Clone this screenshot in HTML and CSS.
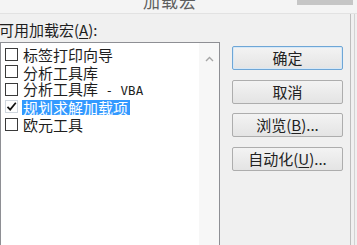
FILE: index.html
```html
<!DOCTYPE html>
<html lang="zh-CN">
<head>
  <meta charset="UTF-8">
  <title>加载宏</title>
  <link rel="stylesheet" href="styles.css">
</head>
<body>
  <div class="window">
    <div class="titlebar">
      <span class="title">加载宏</span>
      <span class="close"></span>
    </div>
    <div class="client">
      <div class="left">
        <div class="label">可用加载宏(<u>A</u>):</div>
        <div class="listbox">
          <ul class="items">
            <li><span class="check"></span><span class="name">标签打印向导</span></li>
            <li><span class="check"></span><span class="name">分析工具库</span></li>
            <li><span class="check"></span><span class="name">分析工具库<span class="latin"> - VBA</span></span></li>
            <li class="selected"><span class="check checked"><svg viewBox="0 0 13 13" width="13" height="13"><path d="M2.5 6.8 L5.2 9.6 L10.8 2.8" fill="none" stroke="#111" stroke-width="1.7"/></svg></span><span class="name">规划求解加载项</span></li>
            <li><span class="check"></span><span class="name">欧元工具</span></li>
          </ul>
          <div class="scrollbar">
            <svg class="arrow" viewBox="0 0 9 6" width="9" height="6"><path d="M1 5 L4.5 1.5 L8 5" fill="none" stroke="#a6a6a6" stroke-width="1.4"/></svg>
          </div>
        </div>
      </div>
      <div class="buttons">
        <button class="btn default">确定</button>
        <button class="btn">取消</button>
        <button class="btn">浏览(<u>B</u>)...</button>
        <button class="btn">自动化(<u>U</u>)...</button>
      </div>
    </div>
  </div>
</body>
</html>
```

FILE: styles.css
```css
* { box-sizing: border-box; }
html, body {
  margin: 0; padding: 0;
  width: 357px; height: 245px;
  overflow: hidden;
  background: #f0f0f0;
}
body {
  font-family: "Noto Sans CJK SC", "Liberation Sans", sans-serif;
  font-size: 15px;
  color: #1e1e1e;
}
.titlebar {
  height: 14px;
  display: flex;
  align-items: flex-start;
  background: #f4f4f4;
  border-bottom: 1px solid #e2e2e2;
  overflow: hidden;
}
.title {
  margin: -8px 0 0 143px;
  font-size: 17px; line-height: 17px;
  color: #5e5e5e;
  letter-spacing: 1px;
}
.close {
  margin-left: auto; margin-right: 4px;
  width: 56px; height: 5px;
  background: #c6c6c6;
}
.client {
  display: flex;
  width: 351px;
  height: 231px;
  padding-top: 7px;
  border-right: 1px solid #bdbdbd;
  box-shadow: 3px 0 0 #f0f0f0, 4px 0 0 #d2d2d2;
  overflow: hidden;
}
.left { width: 220px; flex: none; }
.label {
  margin-left: -1px;
  height: 18px; line-height: 18px;
  margin-bottom: 3px;
  white-space: nowrap;
}
.label u, .btn u { text-underline-offset: 2px; }
.listbox {
  display: flex;
  height: 210px;
  background: #fff;
  border: 1px solid #8e8f94;
}
.items {
  flex: 1;
  list-style: none;
  margin: 0; padding: 3px 0 0 0;
}
.items li {
  display: flex;
  align-items: center;
  height: 17.5px;
  white-space: nowrap;
}
.check {
  width: 13px; height: 13px;
  margin: -1px 5px 0 4px;
  border: 1px solid #3a3a3a;
  background: #fff;
  flex: none;
}
.check svg { display: block; margin: -1px; }
.check.checked { border-color: #cfd6de; }
.name {
  padding: 0 2px 0 0;
  line-height: 15px;
}
.latin { font-family: "DejaVu Sans Mono", monospace; font-size: 12.5px; }
.selected .name {
  margin-left: -1px;
  padding-left: 1px;
  background: #3399ff;
  color: #fff;
}
.scrollbar {
  width: 20px;
  flex: none;
  background: #f7f7f7;
  display: flex;
  justify-content: center;
  padding-top: 13px;
}
.arrow { display: block; }
.buttons {
  display: flex;
  flex-direction: column;
  gap: 9.5px;
  margin-left: 12px;
  padding-top: 25px;
}
.btn {
  width: 111px; height: 24px;
  padding: 0;
  font: inherit;
  color: #222;
  line-height: 22px;
  background: linear-gradient(#f3f3f3, #e4e4e4);
  border: 1px solid #adadad;
  border-radius: 2px;
}
.btn.default {
  border-color: #6ea6d6;
  box-shadow: inset 0 0 0 1px #d6e8f7;
}
```
